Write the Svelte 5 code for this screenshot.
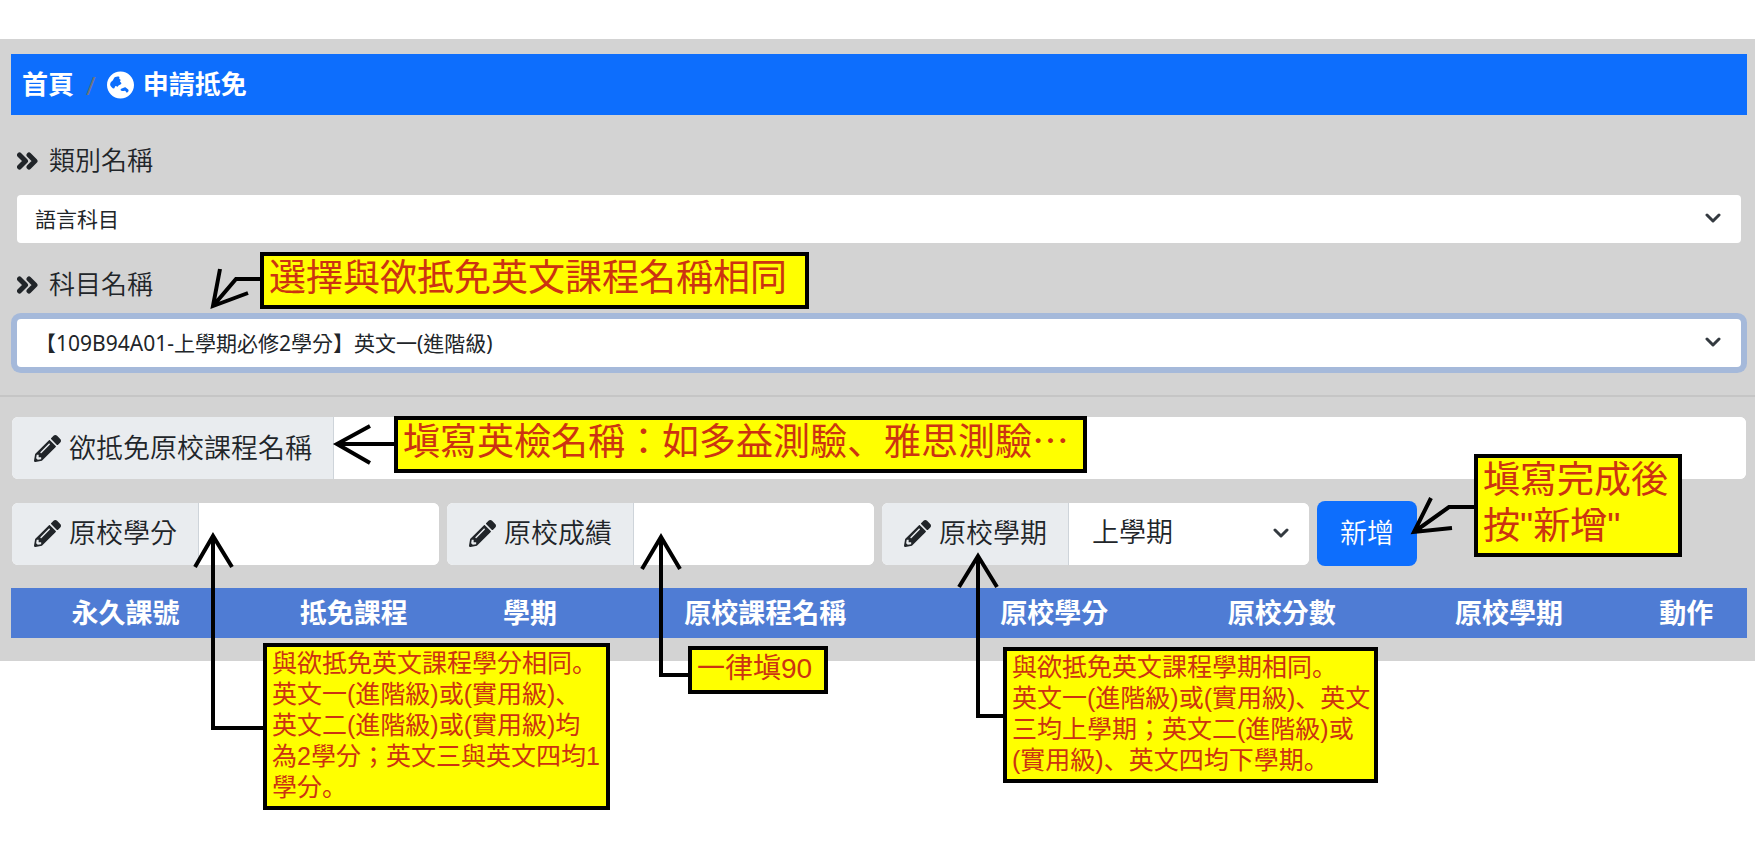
<script lang="ts">
  let category = '語言科目';
  let subject = '【109B94A01-上學期必修2學分】英文一(進階級)';
  let courseName = '';
  let credits = '';
  let score = '';
  let term = '上學期';

  const columns = [
    { title: '永久課號', width: 13.2 },
    { title: '抵免課程', width: 13.1 },
    { title: '學期', width: 7.2 },
    { title: '原校課程名稱', width: 19.9 },
    { title: '原校學分', width: 13.4 },
    { title: '原校分數', width: 12.8 },
    { title: '原校學期', width: 13.4 },
    { title: '動作', width: 7 }
  ];

  // arrow lines of the help notes, in page coordinates
  const arrows = [
    'M260 279H236L213 306M220 269L213 306L248 293',
    'M394 444H337M370 426L337 444L370 463',
    'M263 728H213V536M195 567L213 536L232 567',
    'M688 675H661V537M642 569L661 537L680 569',
    'M1003 716H978V556M959 587L978 556L997 587',
    'M1474 507H1449L1414 532M1431 498L1414 532L1452 528'
  ];
</script>

{#snippet pencil()}
  <svg class="pencil" viewBox="0 0 512 512" aria-hidden="true">
    <path d="M497.900 142.100l-46.100 46.100c-4.700 4.700-12.300 4.700-17 0l-111-111c-4.700-4.700-4.700-12.300 0-17l46.100-46.100c18.700-18.700 49.100-18.700 67.900 0l60.100 60.100c18.800 18.700 18.800 49.100 0 67.900zM284.200 99.800L21.600 362.400.4 483.900c-2.900 16.400 11.400 30.600 27.800 27.800l121.500-21.300 262.600-262.600c4.700-4.700 4.700-12.300 0-17l-111-111c-4.800-4.700-12.400-4.700-17.100 0zM124.100 339.900c-5.500-5.500-5.500-14.300 0-19.800l154-154c5.500-5.500 14.300-5.500 19.800 0s5.500 14.300 0 19.800l-154 154c-5.500 5.500-14.300 5.500-19.800 0zM88 424h48v36.300l-64.500 11.300-31.100-31.100L51.700 376H88v48z" />
  </svg>
{/snippet}

{#snippet angles()}
  <svg class="angles" viewBox="0 0 21 18" aria-hidden="true">
    <path d="M2.500 3l6 6-6 6M12 3l6 6-6 6" />
  </svg>
{/snippet}

{#snippet caret()}
  <svg class="caret" viewBox="0 0 16 16" aria-hidden="true">
    <path d="M2 5l6 6 6-6" />
  </svg>
{/snippet}

<main class="page">
  <section class="panel">
    <nav class="breadcrumb">
      <a href="#home">首頁</a>
      <span class="slash">/</span>
      <svg class="globe" viewBox="0 0 496 512" aria-hidden="true">
        <path d="M248 8C111 8 0 119 0 256s111 248 248 248 248-111 248-248S385 8 248 8zM60 262c-4-18 0-46 14-62 12-14 30-16 38-34 8-20 16-46 40-58 26-12 56-14 72-2 12 10 0 20 2 34 2 12 22 8 24 22 2 12-14 18-10 30 4 14 24 16 24 34 0 20-22 24-36 30-16 6-22 22-34 30-14 8-22-12-36-10-16 4-12 34-28 44-20 10-62-34-70-58zM250 350c-6-16 14-32 34-34 16-2 26-18 46-18 16 0 22 14 36 20 18 8 34 22 30 42-4 18-18 32-34 34-14 0-10-22-24-30-16-8-32 2-50 4-16 0-32-4-38-18z" />
      </svg>
      <a href="#apply">申請抵免</a>
    </nav>

    <div class="field">
      <label for="category">{@render angles()}<span>類別名稱</span></label>
      <div class="select-box">
        <select id="category" bind:value={category}>
          <option>語言科目</option>
        </select>
        {@render caret()}
      </div>
    </div>

    <div class="field">
      <label for="subject">{@render angles()}<span>科目名稱</span></label>
      <div class="select-box active">
        <select id="subject" bind:value={subject}>
          <option>【109B94A01-上學期必修2學分】英文一(進階級)</option>
        </select>
        {@render caret()}
      </div>
    </div>

    <hr />

    <div class="form">
      <div class="group">
        <label for="course">{@render pencil()}<span>欲抵免原校課程名稱</span></label>
        <input id="course" type="text" bind:value={courseName} />
      </div>

      <div class="row">
        <div class="group">
          <label for="credits">{@render pencil()}<span>原校學分</span></label>
          <input id="credits" type="text" bind:value={credits} />
        </div>
        <div class="group">
          <label for="score">{@render pencil()}<span>原校成績</span></label>
          <input id="score" type="text" bind:value={score} />
        </div>
        <div class="group">
          <label for="term">{@render pencil()}<span>原校學期</span></label>
          <div class="select-box large">
            <select id="term" bind:value={term}>
              <option>上學期</option>
              <option>下學期</option>
            </select>
            {@render caret()}
          </div>
        </div>
        <button type="button">新增</button>
      </div>
    </div>

    <table>
      <thead>
        <tr>
          {#each columns as col}
            <th style="width: {col.width}%">{col.title}</th>
          {/each}
        </tr>
      </thead>
    </table>
  </section>

  <svg class="arrows" aria-hidden="true">
    {#each arrows as d}
      <path {d} />
    {/each}
  </svg>

  <p class="note big note-subject">選擇與欲抵免英文課程名稱相同</p>
  <p class="note big note-course">塡寫英檢名稱：如多益測驗、雅思測驗⋯</p>
  <p class="note big note-add">塡寫完成後<br />按"新增"</p>
  <p class="note note-credits">
    與欲抵免英文課程學分相同。<br />英文一(進階級)或(實用級)、<br />英文二(進階級)或(實用級)均<br
    />為2學分；英文三與英文四均1<br />學分。
  </p>
  <p class="note medium note-score">一律塡90</p>
  <p class="note note-term">
    與欲抵免英文課程學期相同。<br />英文一(進階級)或(實用級)、英文<br />三均上學期；英文二(進階級)或<br
    />(實用級)、英文四均下學期。
  </p>
</main>

<style>
  :global(body) {
    background: #fff;
  }

  .page {
    position: relative;
    min-height: 100vh;
    padding-top: 39px;
    box-sizing: border-box;
    color: #212529;
    font-family: 'Noto Sans', 'Noto Sans CJK TC', sans-serif;
    font-size: 27px;
  }

  .panel {
    background: #d3d3d3;
    padding: 15px 0 23px;
  }

  .breadcrumb {
    display: flex;
    align-items: center;
    height: 61px;
    margin: 0 8px 0 11px;
    padding: 0 11px;
    box-sizing: border-box;
    background: #0d6efd;
    font-size: 26px;
    font-weight: 700;
  }

  .breadcrumb a {
    padding-bottom: 4px;
    color: #fff;
    text-decoration: none;
  }

  .slash {
    margin: 0 11px 0 12px;
    color: #6c757d;
    font-weight: 400;
  }

  .globe {
    width: 27px;
    height: 28px;
    margin-right: 9px;
    fill: #fff;
  }

  .field {
    padding: 0 14px 0 17px;
    margin-top: 25px;
  }

  .field + .field {
    margin-top: 21px;
  }

  .field label {
    display: flex;
    align-items: center;
    gap: 11px;
    height: 42px;
    margin-bottom: 13px;
    font-size: 26px;
    font-weight: 350;
  }

  label span {
    padding-bottom: 4px;
  }

  .angles {
    width: 21px;
    height: 18px;
    fill: none;
    stroke: #212529;
    stroke-width: 5;
    stroke-linecap: round;
    stroke-linejoin: round;
  }

  .select-box {
    position: relative;
    height: 48px;
    border-radius: 4px;
    background: #fff;
  }

  .select-box.active {
    box-shadow: 0 0 0 6px #a5b9da;
  }

  .select-box select {
    width: 100%;
    height: 100%;
    padding: 0 54px 0 18px;
    border: 0;
    border-radius: 4px;
    outline: 0;
    background: transparent;
    appearance: none;
    color: inherit;
    font-family: inherit;
    font-size: 21px;
  }

  .caret {
    position: absolute;
    top: 50%;
    right: 20px;
    width: 16px;
    height: 16px;
    margin-top: -9px;
    fill: none;
    stroke: #343a40;
    stroke-width: 3;
    stroke-linecap: round;
    stroke-linejoin: round;
    pointer-events: none;
  }

  hr {
    height: 2px;
    margin: 28px 0 20px;
    border: 0;
    background: #c5c5c5;
  }

  .form {
    display: flex;
    flex-direction: column;
    gap: 22px;
    padding: 0 9px 0 12px;
    font-weight: 350;
  }

  .row {
    display: flex;
    align-items: center;
    gap: 8px;
  }

  .group {
    display: flex;
    height: 62px;
    border-radius: 6px;
    background: #fff;
    overflow: hidden;
  }

  .row .group {
    flex: 0 1 427px;
  }

  .group label {
    display: flex;
    align-items: center;
    gap: 8px;
    padding: 0 21px 0 22px;
    border-right: 1px solid #ced4da;
    background: #e9ecef;
    white-space: nowrap;
  }

  .pencil {
    width: 27px;
    height: 27px;
    fill: #212529;
  }

  .group input {
    flex: 1;
    min-width: 0;
    padding: 0 20px;
    border: 0;
    outline: 0;
    background: #fff;
    font-family: inherit;
    font-size: 27px;
  }

  .select-box.large {
    flex: 1;
    height: 100%;
  }

  .select-box.large select {
    padding: 0 54px 4px 23px;
    font-size: 27px;
    font-weight: 350;
  }

  button {
    height: 65px;
    padding: 0 23px 4px;
    border: 0;
    border-radius: 8px;
    background: #0d6efd;
    color: #fff;
    font-family: inherit;
    font-size: 27px;
    font-weight: 350;
  }

  table {
    width: calc(100% - 19px);
    margin: 22px 8px 0 11px;
    border-collapse: collapse;
    table-layout: fixed;
  }

  th {
    height: 50px;
    padding: 0;
    background: #4f7cd4;
    color: #fff;
    line-height: 40px;
    font-weight: 700;
  }

  .arrows {
    position: absolute;
    top: 0;
    left: 0;
    width: 100%;
    height: 100%;
    fill: none;
    stroke: #000;
    stroke-width: 4;
    pointer-events: none;
  }

  .note {
    position: absolute;
    margin: 0;
    padding: 1px 5px 3px;
    box-sizing: border-box;
    border: 4px solid #000;
    background: #ff0;
    color: #cc3311;
    font-family: 'Liberation Sans', 'Noto Sans CJK JP', sans-serif;
    font-size: 25px;
    line-height: 31px;
    white-space: nowrap;
  }

  .note.big {
    padding-top: 0;
    font-size: 37px;
    line-height: 46px;
  }

  .note.medium {
    font-size: 28px;
    line-height: 36px;
  }

  .note-subject {
    top: 252px;
    left: 260px;
    width: 549px;
  }

  .note-course {
    top: 416px;
    left: 394px;
    width: 693px;
  }

  .note-add {
    top: 454px;
    left: 1474px;
    width: 208px;
  }

  .note-credits {
    top: 643px;
    left: 263px;
    width: 347px;
  }

  .note-score {
    top: 646px;
    left: 688px;
    width: 140px;
  }

  .note-term {
    top: 647px;
    left: 1003px;
    width: 375px;
  }
</style>
